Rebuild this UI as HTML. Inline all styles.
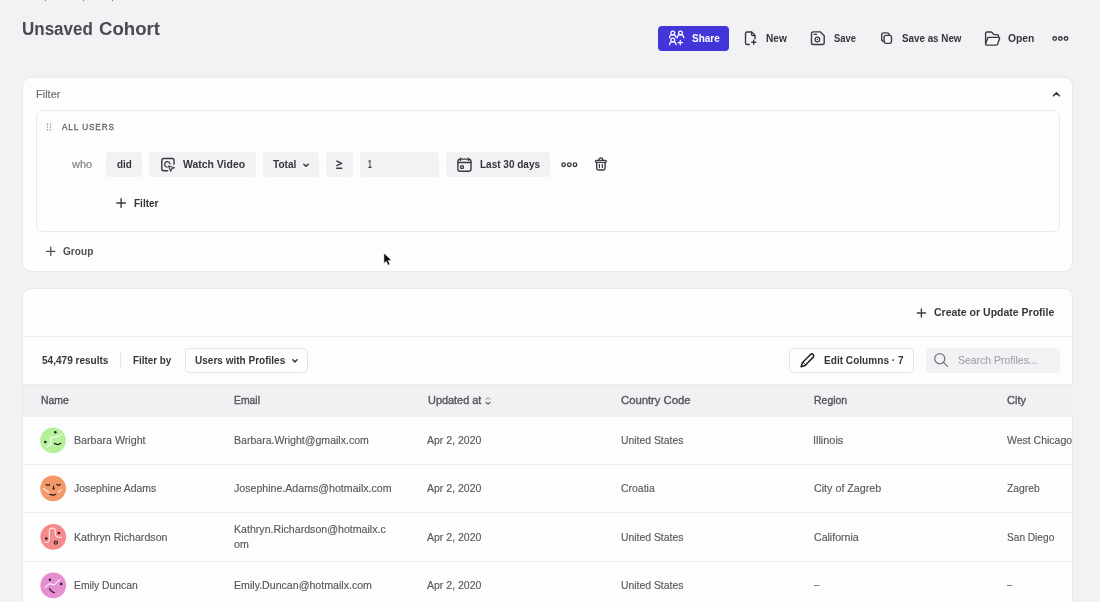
<!DOCTYPE html>
<html><head><meta charset="utf-8">
<style>
*{box-sizing:border-box;margin:0;padding:0}
html,body{width:1100px;height:602px;overflow:hidden;background:#f2f1f3;font-family:"Liberation Sans",sans-serif}
.a{position:absolute}
.panel{position:absolute;background:#fefdfe;border:1px solid #e9e8eb}
.chip{position:absolute;top:152.2px;height:24.9px;background:#f2f2f4;border-radius:4px}
.obtn{position:absolute;top:347.9px;height:24.7px;border:1px solid #e4e4e8;border-radius:4.5px;background:#fefefe}
.t{position:absolute;white-space:nowrap;line-height:1;transform-origin:0 0}
.hl{position:absolute;left:23px;width:1049.5px;height:1px;background:#ececef}
svg{position:absolute;left:0;top:0}
.clip{will-change:transform;position:absolute;left:0;top:0;width:1072.4px;height:602px;overflow:hidden}
</style></head><body>
<!-- breadcrumb remnants -->
<div class="a" style="left:44.5px;top:0;width:1.6px;height:1px;background:#77777d"></div>
<div class="a" style="left:82.5px;top:0;width:1.6px;height:1px;background:#77777d"></div>
<div class="a" style="left:111.5px;top:0;width:1.6px;height:1px;background:#77777d"></div>

<div class="a" style="left:658.3px;top:25.6px;width:70.9px;height:25.1px;background:#4235da;border-radius:4px"></div>

<!-- Filter panel -->
<div class="panel" style="left:22px;top:77.4px;width:1051.4px;height:194.6px;border-radius:9px"></div>
<div class="panel" style="left:35.6px;top:110px;width:1024.2px;height:121.8px;border-radius:7px"></div>
<div class="chip" style="left:106.3px;width:36.2px"></div>
<div class="chip" style="left:149.1px;width:107px"></div>
<div class="chip" style="left:262.8px;width:55.9px"></div>
<div class="chip" style="left:325.7px;width:27.6px"></div>
<div class="chip" style="left:360px;width:78.9px"></div>
<div class="chip" style="left:445.7px;width:104.4px"></div>

<!-- Results panel -->
<div class="panel" style="left:22px;top:288.4px;width:1051.4px;height:340px;border-radius:9px"></div>
<div class="hl" style="top:335.6px"></div>
<div class="a" style="left:120.2px;top:352.6px;width:1px;height:14.8px;background:#e4e4e8"></div>
<div class="obtn" style="left:185.1px;width:123px"></div>
<div class="obtn" style="left:789.4px;width:124.2px"></div>
<div class="a" style="left:926.4px;top:348px;width:133.2px;height:24.6px;border-radius:4.5px;background:#f2f2f4"></div>
<div class="a" style="left:23px;top:384px;width:1049.5px;height:32.7px;background:#f1f0f2;border-top:1px solid #ebeaed"></div>
<div class="hl" style="top:464px"></div>
<div class="hl" style="top:512.3px"></div>
<div class="hl" style="top:560.7px"></div>

<div class="clip">
<div class="t" style="left:21.96px;top:20.00px;font-size:18px;font-weight:700;color:#4a4a50;transform:scaleX(0.9434);">Unsaved</div>
<div class="t" style="left:99.00px;top:20.00px;font-size:18px;font-weight:700;color:#4a4a50;transform:scaleX(1.0341);">Cohort</div>
<div class="t" style="left:691.70px;top:33.00px;font-size:11.1px;font-weight:700;color:#ffffff;transform:scaleX(0.9001);">Share</div>
<div class="t" style="left:766.10px;top:33.00px;font-size:11.1px;font-weight:700;color:#35353b;transform:scaleX(0.9145);">New</div>
<div class="t" style="left:833.50px;top:33.00px;font-size:11.1px;font-weight:700;color:#35353b;transform:scaleX(0.8470);">Save</div>
<div class="t" style="left:901.80px;top:33.00px;font-size:11.1px;font-weight:700;color:#35353b;transform:scaleX(0.8847);">Save as New</div>
<div class="t" style="left:1008.00px;top:33.00px;font-size:11.1px;font-weight:700;color:#35353b;transform:scaleX(0.9274);">Open</div>
<div class="t" style="left:35.90px;top:89.00px;font-size:11.1px;font-weight:400;color:#6a6a71;transform:scaleX(0.9897);-webkit-text-stroke:0.15px #6a6a71;">Filter</div>
<div class="t" style="left:71.79px;top:159.00px;font-size:11.1px;font-weight:400;color:#7c7c83;transform:scaleX(0.9914);-webkit-text-stroke:0.15px #7c7c83;">who</div>
<div class="t" style="left:116.90px;top:159.00px;font-size:11.1px;font-weight:700;color:#35353b;transform:scaleX(0.8897);">did</div>
<div class="t" style="left:183.10px;top:159.00px;font-size:11.1px;font-weight:700;color:#35353b;transform:scaleX(0.9414);">Watch Video</div>
<div class="t" style="left:273.20px;top:159.00px;font-size:11.1px;font-weight:700;color:#35353b;transform:scaleX(0.9065);">Total</div>
<div class="t" style="left:368.30px;top:159.00px;font-size:11.1px;font-weight:700;color:#35353b;transform:scaleX(0.6000);">1</div>
<div class="t" style="left:479.70px;top:159.00px;font-size:11.1px;font-weight:700;color:#35353b;transform:scaleX(0.9017);">Last 30 days</div>
<div class="t" style="left:133.50px;top:198.00px;font-size:11.1px;font-weight:700;color:#35353b;transform:scaleX(0.9027);">Filter</div>
<div class="t" style="left:63.10px;top:246.00px;font-size:11.1px;font-weight:700;color:#505056;transform:scaleX(0.9105);">Group</div>
<div class="t" style="left:934.20px;top:307.00px;font-size:11.1px;font-weight:700;color:#35353b;transform:scaleX(0.9470);">Create or Update Profile</div>
<div class="t" style="left:41.80px;top:355.00px;font-size:11.1px;font-weight:700;color:#35353b;transform:scaleX(0.9054);">54,479 results</div>
<div class="t" style="left:133.40px;top:355.00px;font-size:11.1px;font-weight:700;color:#35353b;transform:scaleX(0.8867);">Filter by</div>
<div class="t" style="left:195.40px;top:355.00px;font-size:11.1px;font-weight:700;color:#35353b;transform:scaleX(0.9037);">Users with Profiles</div>
<div class="t" style="left:823.50px;top:355.00px;font-size:11.1px;font-weight:700;color:#35353b;transform:scaleX(0.9090);">Edit Columns · 7</div>
<div class="t" style="left:958.00px;top:355.00px;font-size:11.1px;font-weight:400;color:#a3a3a9;transform:scaleX(0.9421);-webkit-text-stroke:0.15px #a3a3a9;">Search Profiles...</div>
<div class="t" style="left:40.50px;top:395.00px;font-size:11.1px;font-weight:400;color:#56565c;transform:scaleX(0.9415);-webkit-text-stroke:0.38px #56565c;">Name</div>
<div class="t" style="left:234.00px;top:395.00px;font-size:11.1px;font-weight:400;color:#56565c;transform:scaleX(0.9349);-webkit-text-stroke:0.38px #56565c;">Email</div>
<div class="t" style="left:427.50px;top:395.00px;font-size:11.1px;font-weight:400;color:#56565c;transform:scaleX(0.9835);-webkit-text-stroke:0.38px #56565c;">Updated at</div>
<div class="t" style="left:620.60px;top:395.00px;font-size:11.1px;font-weight:400;color:#56565c;transform:scaleX(1.0164);-webkit-text-stroke:0.38px #56565c;">Country Code</div>
<div class="t" style="left:814.00px;top:395.00px;font-size:11.1px;font-weight:400;color:#56565c;transform:scaleX(0.9432);-webkit-text-stroke:0.38px #56565c;">Region</div>
<div class="t" style="left:1007.40px;top:395.00px;font-size:11.1px;font-weight:400;color:#56565c;transform:scaleX(0.9970);-webkit-text-stroke:0.38px #56565c;">City</div>
<div class="t" style="left:74.10px;top:435.00px;font-size:11.1px;font-weight:400;color:#56565d;transform:scaleX(0.9621);-webkit-text-stroke:0.15px #56565d;">Barbara Wright</div>
<div class="t" style="left:74.10px;top:483.00px;font-size:11.1px;font-weight:400;color:#56565d;transform:scaleX(0.9386);-webkit-text-stroke:0.15px #56565d;">Josephine Adams</div>
<div class="t" style="left:74.00px;top:532.00px;font-size:11.1px;font-weight:400;color:#56565d;transform:scaleX(0.9593);-webkit-text-stroke:0.15px #56565d;">Kathryn Richardson</div>
<div class="t" style="left:74.00px;top:580.00px;font-size:11.1px;font-weight:400;color:#56565d;transform:scaleX(0.9302);-webkit-text-stroke:0.15px #56565d;">Emily Duncan</div>
<div class="t" style="left:234.00px;top:435.00px;font-size:11.1px;font-weight:400;color:#56565d;transform:scaleX(0.9511);-webkit-text-stroke:0.15px #56565d;">Barbara.Wright@gmailx.com</div>
<div class="t" style="left:234.00px;top:483.00px;font-size:11.1px;font-weight:400;color:#56565d;transform:scaleX(0.9559);-webkit-text-stroke:0.15px #56565d;">Josephine.Adams@hotmailx.com</div>
<div class="t" style="left:234.00px;top:524.00px;font-size:11.1px;font-weight:400;color:#56565d;transform:scaleX(0.9567);-webkit-text-stroke:0.15px #56565d;">Kathryn.Richardson@hotmailx.c</div>
<div class="t" style="left:234.00px;top:539.00px;font-size:11.1px;font-weight:400;color:#56565d;transform:scaleX(0.9624);-webkit-text-stroke:0.15px #56565d;">om</div>
<div class="t" style="left:234.00px;top:580.00px;font-size:11.1px;font-weight:400;color:#56565d;transform:scaleX(0.9564);-webkit-text-stroke:0.15px #56565d;">Emily.Duncan@hotmailx.com</div>
<div class="t" style="left:427.20px;top:435.00px;font-size:11.1px;font-weight:400;color:#56565d;transform:scaleX(0.9477);-webkit-text-stroke:0.15px #56565d;">Apr 2, 2020</div>
<div class="t" style="left:427.20px;top:483.00px;font-size:11.1px;font-weight:400;color:#56565d;transform:scaleX(0.9477);-webkit-text-stroke:0.15px #56565d;">Apr 2, 2020</div>
<div class="t" style="left:427.20px;top:532.00px;font-size:11.1px;font-weight:400;color:#56565d;transform:scaleX(0.9477);-webkit-text-stroke:0.15px #56565d;">Apr 2, 2020</div>
<div class="t" style="left:427.20px;top:580.00px;font-size:11.1px;font-weight:400;color:#56565d;transform:scaleX(0.9477);-webkit-text-stroke:0.15px #56565d;">Apr 2, 2020</div>
<div class="t" style="left:620.80px;top:435.00px;font-size:11.1px;font-weight:400;color:#56565d;transform:scaleX(0.9366);-webkit-text-stroke:0.15px #56565d;">United States</div>
<div class="t" style="left:620.80px;top:483.00px;font-size:11.1px;font-weight:400;color:#56565d;transform:scaleX(0.9428);-webkit-text-stroke:0.15px #56565d;">Croatia</div>
<div class="t" style="left:620.80px;top:532.00px;font-size:11.1px;font-weight:400;color:#56565d;transform:scaleX(0.9366);-webkit-text-stroke:0.15px #56565d;">United States</div>
<div class="t" style="left:620.80px;top:580.00px;font-size:11.1px;font-weight:400;color:#56565d;transform:scaleX(0.9366);-webkit-text-stroke:0.15px #56565d;">United States</div>
<div class="t" style="left:812.92px;top:435.00px;font-size:11.1px;font-weight:400;color:#56565d;transform:scaleX(0.9808);-webkit-text-stroke:0.15px #56565d;">Illinois</div>
<div class="t" style="left:813.90px;top:483.00px;font-size:11.1px;font-weight:400;color:#56565d;transform:scaleX(0.9654);-webkit-text-stroke:0.15px #56565d;">City of Zagreb</div>
<div class="t" style="left:813.90px;top:532.00px;font-size:11.1px;font-weight:400;color:#56565d;transform:scaleX(0.9520);-webkit-text-stroke:0.15px #56565d;">California</div>
<div class="t" style="left:1007.40px;top:435.00px;font-size:11.1px;font-weight:400;color:#56565d;transform:scaleX(0.9449);-webkit-text-stroke:0.15px #56565d;">West Chicago</div>
<div class="t" style="left:1007.40px;top:483.00px;font-size:11.1px;font-weight:400;color:#56565d;transform:scaleX(0.9320);-webkit-text-stroke:0.15px #56565d;">Zagreb</div>
<div class="t" style="left:1007.40px;top:532.00px;font-size:11.1px;font-weight:400;color:#56565d;transform:scaleX(0.9121);-webkit-text-stroke:0.15px #56565d;">San Diego</div>
<div class="t" style="left:62px;top:123px;font-size:9.3px;color:#5e5e65;letter-spacing:1.05px;-webkit-text-stroke:0.3px #5e5e65;transform:scaleX(0.878)">ALL USERS</div>
<div class="t" style="left:813.9px;top:579px;font-size:11.1px;color:#56565d;transform:scaleX(0.85)">&ndash;</div>
<div class="t" style="left:1007.4px;top:579px;font-size:11.1px;color:#56565d;transform:scaleX(0.85)">&ndash;</div>
</div>

<svg width="1100" height="602" viewBox="0 0 1100 602" fill="none" stroke-linecap="round" stroke-linejoin="round">
<!-- share icon -->
<g stroke="#fff" stroke-width="1.25">
<circle cx="672.8" cy="32.9" r="1.9"/><path d="M669.6 37.7a3.25 3.1 0 0 1 6.5 0"/>
<circle cx="680.5" cy="32.9" r="1.9"/><path d="M677.3 37.7a3.25 3.1 0 0 1 6.5 0"/>
<circle cx="672.8" cy="40" r="1.9"/><path d="M669.6 44.7a3.25 3.1 0 0 1 6.5 0"/>
<path d="M680.3 40.4v4.4M678.1 42.6h4.4"/>
</g>
<g stroke="#3a3a40" stroke-width="1.4">
<!-- new -->
<path d="M749.4 44.5h-2.300a1.600 1.600 0 0 1-1.600-1.600v-9.300a1.600 1.600 0 0 1 1.600-1.600h4.600l3.300 3.500v3.300"/>
<path d="M751.500 32.200v2.100a1.300 1.300 0 0 0 1.300 1.300h2.100" stroke-width="1.200"/>
<path d="M753.700 40.200v4M751.700 42.200h4" stroke-width="1.350"/>
<!-- save -->
<path d="M813.300 31.900h7.100l3.800 3.800v7a1.800 1.800 0 0 1-1.800 1.800h-9.100a1.800 1.800 0 0 1-1.800-1.800v-9a1.800 1.800 0 0 1 1.800-1.800z"/>
<path d="M814.100 34.400h2.400" stroke-width="1.200"/>
<circle cx="817.400" cy="39.500" r="2.300" stroke-width="1.250"/><circle cx="817.400" cy="39.500" r="0.700" fill="#3a3a40" stroke="none"/>
<!-- copy -->
<rect x="881.700" y="32.900" width="7.400" height="8.400" rx="2.100" stroke-width="1.350"/>
<rect x="884.100" y="35.300" width="7.400" height="8.100" rx="2.100" fill="#f7f7f8" stroke-width="1.350"/>
<!-- folder -->
<path d="M985.600 43.200v-9.900a1.300 1.300 0 0 1 1.300-1.300h4.200a1.300 1.300 0 0 1 1 .5l1.300 1.600a1.300 1.300 0 0 0 1 .5h2.600a1.500 1.500 0 0 1 1.500 1.500v1.200"/>
<path d="M988.900 37.400h9.900a.8.8 0 0 1 .75 1.050l-1.900 5.700a1.400 1.400 0 0 1-1.300.95h-9.900a.9.9 0 0 1-.85-1.200l1.900-5.500a1.500 1.500 0 0 1 1.400-1z" fill="#f8f8f9"/>
<!-- dots top -->
<circle cx="1054.7" cy="38.5" r="1.8" stroke-width="1.35"/><circle cx="1060.35" cy="38.5" r="1.8" stroke-width="1.35"/><circle cx="1066" cy="38.5" r="1.8" stroke-width="1.35"/>
<!-- collapse caret -->
<path d="M1053.5 95.8l2.95-2.9 2.95 2.9" stroke-width="1.6"/>
<!-- watch video -->
<path d="M167.600 170.800h-3.800a2 2 0 0 1-2-2v-8.300a2 2 0 0 1 2-2h8.200a2 2 0 0 1 2 2v3.800"/>
<path d="M167.100 167.100a2.700 2.700 0 1 1 3-3.200" stroke-width="1.250"/>
<path d="M168.600 166l5.900 1.700-2.700 1.100-1.100 2.400z" stroke-width="1.100" fill="#f8f8f9"/>
<!-- total caret -->
<path d="M303.800 164.200l2.200 2.100 2.200-2.100" stroke-width="1.500"/>
<!-- >= -->
<path d="M336.900 161.100l4.700 2.250-4.700 2.250M336.700 168.300h5.100" stroke-width="1.450"/>
<!-- calendar -->
<rect x="457.900" y="159.100" width="13.100" height="12.100" rx="2.300"/>
<path d="M460.500 158.200v2.200M468.400 158.200v2.200M457.900 162.500h13.100" stroke-width="1.300"/>
<rect x="460.600" y="165.800" width="2.800" height="2.600" rx=".5" stroke-width="1.200"/>
<!-- row dots -->
<circle cx="563.6" cy="164.7" r="1.8" stroke-width="1.35"/><circle cx="569.3" cy="164.7" r="1.8" stroke-width="1.35"/><circle cx="575" cy="164.7" r="1.8" stroke-width="1.35"/>
<!-- trash -->
<rect x="595.500" y="160.400" width="10.800" height="1.900" rx=".9" stroke-width="1.200"/>
<path d="M599 160.200c0-1.600.8-2.300 1.900-2.300s1.900.7 1.900 2.300" stroke-width="1.250"/>
<path d="M596.700 162.700v5.600a1.700 1.700 0 0 0 1.700 1.700h5a1.700 1.700 0 0 0 1.700-1.700v-5.600"/>
<path d="M599.400 164.300v3.400M602.400 164.300v3.400" stroke-width="1.200"/>
<!-- plus icons -->
<path d="M121.1 198.7v8.7M116.75 203.05h8.7" stroke-width="1.4"/>
<path d="M50.75 247.1v8.4M46.55 251.3h8.4" stroke="#505056" stroke-width="1.3"/>
<path d="M921.4 308.9v8.2M917.3 313h8.2" stroke-width="1.35"/>
<!-- dropdown caret -->
<path d="M292.700 359.800l2.200 2.100 2.200-2.100" stroke-width="1.500"/>
<!-- pencil -->
<g stroke="#202024" stroke-width="1.500"><path d="M801.100 366.700l1.200-4 8.260-8.240a1.900 1.900 0 0 1 2.680 2.680l-8.200 8.300z"/>
<path d="M803.100 362.300l2.700 2.700" stroke-width="1"/></g>
</g>
<!-- search -->
<g stroke="#77777e" stroke-width="1.250"><circle cx="939.800" cy="358.700" r="5.050"/><path d="M943.500 362.500l4.100 3.900"/></g>
<!-- sort -->
<path d="M486 399.4l2-1.8 2 1.8" stroke="#a6a6ac" stroke-width="1.1"/>
<path d="M486 402.3l2 1.8 2-1.8" stroke="#4a4a50" stroke-width="1.1"/>
<!-- drag handle -->
<g fill="#85858c" stroke="none"><circle cx="47.5" cy="124.2" r=".7"/><circle cx="50.6" cy="124.2" r=".7"/><circle cx="47.5" cy="127" r=".7"/><circle cx="50.6" cy="127" r=".7"/><circle cx="47.5" cy="129.8" r=".7"/><circle cx="50.6" cy="129.8" r=".7"/></g>
<!-- avatars -->
<g>
<circle cx="53" cy="440.4" r="12.85" fill="#b5f09b"/>
<path d="M46.6 447.5l4.3-3.6-.3-6.3 5.7-.6 5.3-3" stroke="#eefce6" stroke-width="1.4"/>
<circle cx="55.3" cy="432.3" r="1.25" fill="#1c1c22"/><circle cx="45.3" cy="441.9" r="1.25" fill="#1c1c22"/>
<path d="M54.3 443.3q3.3 2.6 6.6 0" stroke="#1c1c22" stroke-width="1.1"/>

<circle cx="53.1" cy="488.4" r="12.85" fill="#f5986a"/>
<path d="M43.7 488.7l4.9 3.6M61.2 489.6l-2.7 2.8" stroke="#fdeee4" stroke-width="1.3"/>
<path d="M46.2 484.3q1.8 2 3.6 0M56.8 484.3q1.8 2 3.6 0" stroke="#1c1c22" stroke-width="1.1"/>
<path d="M53.3 486.3l1 2.6-1.6-.2" stroke="#1c1c22" stroke-width="1.1"/>
<path d="M49.9 494.3q2.9 1.6 5.8 0" stroke="#1c1c22" stroke-width="1.2"/>

<circle cx="53.25" cy="536.8" r="12.85" fill="#f68a8b"/>
<path d="M44.7 542.5c3.2.4 4.6-.8 4.6-3.6v-7.6c0-2 1.2-3.2 3-3.200s3 1.200 3 3.200v2.800c0 2.400 1.800 3.400 6.200 3.200" stroke="#fdeaea" stroke-width="1.1"/>
<circle cx="58.9" cy="533" r="1.25" fill="#1c1c22"/><circle cx="46.3" cy="538.6" r="1.25" fill="#1c1c22"/>
<circle cx="55.9" cy="542.6" r="1.6" stroke="#1c1c22" stroke-width="1.1"/>

<circle cx="53.25" cy="585.4" r="12.85" fill="#e58fd0"/>
<path d="M45 587.6l4.400-4 4.900 1.300 5.600-5.300" stroke="#fbe9f6" stroke-width="1.2"/>
<circle cx="49.9" cy="579.7" r="1.25" fill="#1c1c22"/><circle cx="61.2" cy="583.9" r="1.25" fill="#1c1c22"/>
<path d="M49.6 588.600q1 3.200 4.700 4" stroke="#1c1c22" stroke-width="1.2"/>
</g>
<!-- cursor -->
<path d="M383.900 253.200v10.200l2.300-2.100 1.800 3.900 1.900-.85-1.800-3.800 3.200-.2z" fill="#0d0d10" stroke="#fff" stroke-width=".5" stroke-linejoin="miter"/>

</svg>
</body></html>
